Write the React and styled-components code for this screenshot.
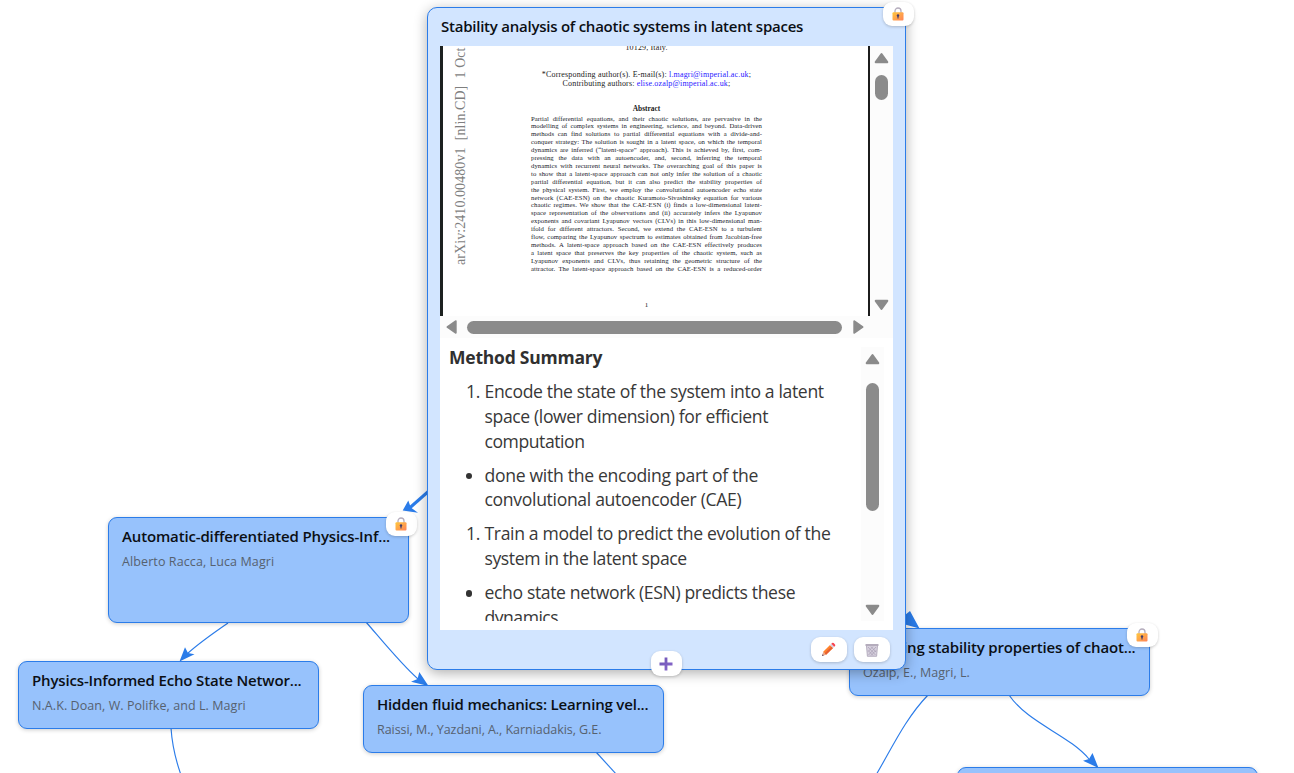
import React from "react";
import styled, { createGlobalStyle } from "styled-components";

const Global = createGlobalStyle`
  * { box-sizing: border-box; }
  body { margin: 0; background: #fff; overflow: hidden; }
`;

const Canvas = styled.main`
  position: relative;
  width: 1294px;
  height: 773px;
  overflow: hidden;
  background: #fff;
  font-family: "Open Sans", "Noto Sans", sans-serif;
`;

const Edges = styled.svg`
  position: absolute;
  inset: 0;
  fill: none;
  stroke: #2b7ce9;
  stroke-width: 1.15;
  polygon { fill: #2b7ce9; stroke: none; }
`;

const Node = styled.article`
  position: absolute;
  left: ${(p) => p.$x}px;
  top: ${(p) => p.$y}px;
  width: 301px;
  height: ${(p) => p.$h || 68}px;
  padding: 8px 13px;
  border: 1px solid #2b7ce9;
  border-radius: 9px;
  background: #97c2fc;
  box-shadow: 0 1px 4px rgba(0, 0, 0, 0.2);
`;

const Title = styled.h2`
  margin: 0;
  font-size: 15px;
  line-height: 20px;
  font-weight: 600;
  color: #0b0f14;
  white-space: nowrap;
  letter-spacing: ${(p) => p.$ls || 0}px;
`;

const Authors = styled.p`
  margin: 6px 0 0;
  font-size: 12.5px;
  line-height: 20px;
  color: #56616f;
  white-space: nowrap;
  letter-spacing: ${(p) => p.$ls || 0}px;
`;

const Paper = styled.article`
  position: absolute;
  left: 427px;
  top: 7px;
  width: 479px;
  height: 663px;
  display: flex;
  flex-direction: column;
  padding: 0 12px;
  border: 1px solid #2b7ce9;
  border-radius: 10px;
  background: #d2e5ff;
  box-shadow: 0 3px 13px rgba(0, 0, 0, 0.32);
`;

const PaperHead = styled.header`
  height: 38px;
  padding: 8px 1px 0;
`;

const Content = styled.div`
  width: 453px;
  height: 584px;
  background: #fff;
`;

const Viewer = styled.section`
  display: grid;
  grid-template-columns: 430px 23px;
  grid-template-rows: 270px 22px;
  background: #fcfcfc;
`;

const PdfPage = styled.div`
  display: flex;
  overflow: hidden;
  background: #fff;
  border-left: 3px solid #1d2120;
  border-right: 2px solid #1c1c1c;
  font-family: "Liberation Serif", serif;
`;

const Stamp = styled.div`
  writing-mode: vertical-rl;
  transform: rotate(180deg);
  width: 18px;
  height: 219px;
  margin-left: 9px;
  font-size: 14px;
  line-height: 18px;
  color: #7f7f7f;
  white-space: pre;
  letter-spacing: ${(p) => p.$ls}px;
`;

const PageText = styled.div`
  width: 231px;
  margin-left: 61px;
  display: flex;
  flex-direction: column;
  align-items: center;
  font-size: 8px;
  line-height: 9px;
  color: #222;
  white-space: nowrap;
`;

const Address = styled.div`
  margin-top: -3px;
  height: 27px;
  letter-spacing: 0.15px;
`;

const Contact = styled.div`
  letter-spacing: ${(p) => p.$ls}px;
  a { color: #2a20ff; }
`;

const AbstractHead = styled.div`
  margin-top: 16px;
  font-size: 7.4px;
  font-weight: 700;
`;

const Abstract = styled.div`
  width: 231px;
  margin-top: 1.5px;
  font-size: 6.7px;
  line-height: 7.92px;
  letter-spacing: 0.06px;
  color: #20222b;
`;

const AbstractLine = styled.div`
  text-align: justify;
  text-align-last: justify;
  white-space: nowrap;
  height: 7.92px;
`;

const PageNumber = styled.div`
  margin-top: 28px;
  font-size: 7px;
`;

const VBar = styled.div`
  display: flex;
  flex-direction: column;
  align-items: center;
  width: 23px;
  height: ${(p) => p.$h}px;
  padding: 6px 0 5px;
  background: #fcfcfc;
`;

const HBar = styled.div`
  display: flex;
  align-items: center;
  padding: 0 4px;
`;

const Thumb = styled.div`
  width: ${(p) => p.$w}px;
  height: ${(p) => p.$h}px;
  margin: ${(p) => p.$m};
  border-radius: 7px;
  background: #8b8b8b;
`;

const ArrowSvg = styled.svg`
  flex: none;
  transform: rotate(${(p) => p.$r}deg);
  fill: #8b8b8b;
  stroke: #8b8b8b;
  stroke-width: 2;
  stroke-linejoin: round;
`;

const Push = styled.div`
  flex: 1;
`;

const Notes = styled.section`
  display: flex;
  height: 283px;
  padding: 9px 9px 0 9px;
  color: #383838;
`;

const NotesText = styled.div`
  width: 412px;
  height: 274px;
  overflow: hidden;
`;

const NotesHead = styled.h3`
  margin: 0 0 11px;
  font-size: 17.5px;
  line-height: 21px;
  font-weight: 700;
  color: #303030;
  letter-spacing: ${(p) => p.$ls || 0}px;
`;

const Item = styled.div`
  display: flex;
  margin-bottom: 9.3px;
  font-size: 17.6px;
  line-height: 24.75px;
`;

const Marker = styled.span`
  width: ${(p) => (p.$dot ? 23 : 31)}px;
  margin-right: ${(p) => (p.$dot ? 12.5 : 4.5)}px;
  text-align: right;
  letter-spacing: -0.4px;
`;

const Dot = styled.span`
  display: inline-block;
  width: 6.5px;
  height: 6.5px;
  margin-bottom: 2.5px;
  border-radius: 50%;
  background: #333;
`;

const ItemLine = styled.div`
  white-space: nowrap;
  letter-spacing: ${(p) => p.$ls || 0}px;
`;

const Chip = styled.button`
  position: absolute;
  left: ${(p) => p.$x}px;
  top: ${(p) => p.$y}px;
  width: ${(p) => p.$w || 31}px;
  height: ${(p) => p.$h || 24}px;
  display: flex;
  align-items: center;
  justify-content: center;
  padding: 0 1px 0 0;
  border: 0;
  border-radius: 9px;
  background: #fff;
  box-shadow: 0 1px 3px rgba(0, 0, 0, 0.2);
`;

const Lock = () => (
  <svg width="12" height="14" viewBox="0 0 12 14">
    <defs>
      <linearGradient id="gold" x1="0" y1="0" x2="1" y2="1">
        <stop offset="0" stopColor="#ffc83d" />
        <stop offset="1" stopColor="#ff8257" />
      </linearGradient>
    </defs>
    <path d="M3 6V4a3 3 0 0 1 6 0v2" fill="none" stroke="#b4acbc" strokeWidth="1.3" />
    <rect x="0.5" y="5.2" width="11" height="8.3" rx="1" fill="url(#gold)" />
    <circle cx="6" cy="8.5" r="1.2" fill="#433b6b" />
    <path d="M6 8v3.5" stroke="#433b6b" strokeWidth="1.1" />
  </svg>
);

const Pencil = () => (
  <svg width="15" height="15" viewBox="0 0 15 15">
    <path d="M1 14l1.2-4.2 2.9 2.9z" fill="#e8a88c" />
    <path d="M1 14l.5-1.8 1.3 1.3z" fill="#54405c" />
    <path d="M2.2 9.8L9 3l3 3-6.9 6.8z" fill="#ff822d" />
    <path d="M3.7 11.3L10.5 4.5 12 6l-6.9 6.8z" fill="#e65f32" />
    <path d="M9 3l1.3-1.3 3 3L12 6z" fill="#d9cfe0" />
    <path d="M10.3 1.7l.8-.8q.8-.6 1.6.2l1.3 1.3q.7.8 0 1.6l-.7.7z" fill="#f8434f" />
  </svg>
);

const Trash = () => (
  <svg width="14" height="14" viewBox="0 0 14 14">
    <path d="M1.4 2h11.2l-1 11.3H2.4z" fill="#d6d0dd" stroke="#a9a1b5" strokeWidth=".8" />
    <path d="M3 4l7.5 8M6 3.5l5 5.5M3.2 7.5l4.8 5M11 4l-7.5 8M8 3.5L3.2 8.5M10.8 7.5l-4.8 5" stroke="#9d94ab" strokeWidth=".6" />
    <rect x=".5" y="1" width="13" height="2" rx=".5" fill="#b4acbc" />
  </svg>
);

const Plus = () => (
  <svg width="14" height="14" viewBox="0 0 14 14">
    <defs>
      <linearGradient id="violet" x1="0" y1="0" x2="1" y2="1">
        <stop offset="0" stopColor="#6d55b5" />
        <stop offset="1" stopColor="#8a68cc" />
      </linearGradient>
    </defs>
    <path d="M5.6 .5h2.8v5.1h5.1v2.8H8.4v5.1H5.6V8.4H.5V5.6h5.1z" fill="url(#violet)" />
  </svg>
);

const Arrow = ({ r }) => (
  <ArrowSvg $r={r} width="15" height="12" viewBox="0 0 15 12">
    <path d="M7.5 2L13.3 10.2H1.7z" />
  </ArrowSvg>
);

const abstract = [
  "Partial differential equations, and their chaotic solutions, are pervasive in the",
  "modelling of complex systems in engineering, science, and beyond. Data-driven",
  "methods can find solutions to partial differential equations with a divide-and-",
  "conquer strategy: The solution is sought in a latent space, on which the temporal",
  "dynamics are inferred (“latent-space” approach). This is achieved by, first, com-",
  "pressing the data with an autoencoder, and, second, inferring the temporal",
  "dynamics with recurrent neural networks. The overarching goal of this paper is",
  "to show that a latent-space approach can not only infer the solution of a chaotic",
  "partial differential equation, but it can also predict the stability properties of",
  "the physical system. First, we employ the convolutional autoencoder echo state",
  "network (CAE-ESN) on the chaotic Kuramoto-Sivashinsky equation for various",
  "chaotic regimes. We show that the CAE-ESN (i) finds a low-dimensional latent-",
  "space representation of the observations and (ii) accurately infers the Lyapunov",
  "exponents and covariant Lyapunov vectors (CLVs) in this low-dimensional man-",
  "ifold for different attractors. Second, we extend the CAE-ESN to a turbulent",
  "flow, comparing the Lyapunov spectrum to estimates obtained from Jacobian-free",
  "methods. A latent-space approach based on the CAE-ESN effectively produces",
  "a latent space that preserves the key properties of the chaotic system, such as",
  "Lyapunov exponents and CLVs, thus retaining the geometric structure of the",
  "attractor. The latent-space approach based on the CAE-ESN is a reduced-order",
];

const notes = [
  { mark: "1.", lines: [["Encode the state of the system into a latent", -0.36], ["space (lower dimension) for efficient", -0.38], ["computation", -0.45]] },
  { lines: [["done with the encoding part of the", -0.31], ["convolutional autoencoder (CAE)", -0.33]] },
  { mark: "1.", lines: [["Train a model to predict the evolution of the", -0.35], ["system in the latent space", -0.42]] },
  { lines: [["echo state network (ESN) predicts these", -0.37], ["dynamics", -0.5]] },
];

export default function App() {
  return (
    <Canvas>
      <Global />
      <Edges width="1294" height="773">
        <path d="M430 490L409 508.5" strokeWidth="3" />
        <polygon points="402.7,510.5 408.3,500.5 410.8,507.5 418,512.8" />
        <path d="M228 623C212 634 199 643 187 654" />
        <polygon points="179.5,661.5 185,647.3 188,653 194.5,654.3" />
        <path d="M366 622C385 644 402 665 418 679" />
        <polygon points="428.5,686 419.3,672 417.5,679 411,681.7" />
        <path d="M171 728Q172.5 751 181 775" />
        <path d="M596 752L617 775" />
        <path d="M928 695C905 719 892 748 876 775" />
        <path d="M1009 695C1028 723 1069 735 1089 759" />
        <polygon points="1098.5,768 1092.5,753 1089,759 1083,760.7" />
        <polygon points="919.5,628.5 910,611 905,615 896,622" />
      </Edges>

      <Node $x={108} $y={517} $h={106}>
        <Title $ls={-0.15}>Automatic-differentiated Physics-Inf...</Title>
        <Authors $ls={0.1}>Alberto Racca, Luca Magri</Authors>
      </Node>
      <Chip $x={386} $y={512}><Lock /></Chip>
      <Node $x={18} $y={661}>
        <Title $ls={-0.16}>Physics-Informed Echo State Networ...</Title>
        <Authors $ls={0.07}>N.A.K. Doan, W. Polifke, and L. Magri</Authors>
      </Node>
      <Node $x={849} $y={628}>
        <Title $ls={-0.17}>Inferring stability properties of chaot...</Title>
        <Authors $ls={0.04}>Özalp, E., Magri, L.</Authors>
      </Node>
      <Chip $x={1127} $y={623}><Lock /></Chip>
      <Node $x={957} $y={767} />

      <Paper>
        <PaperHead>
          <Title $ls={-0.24}>Stability analysis of chaotic systems in latent spaces</Title>
        </PaperHead>
        <Content>
          <Viewer>
            <PdfPage>
              <Stamp $ls={0.07}>{"arXiv:2410.00480v1  [nlin.CD]  1 Oct"}</Stamp>
              <PageText>
                <Address>10129, Italy.</Address>
                <Contact $ls={0.17}>*Corresponding author(s). E-mail(s): <a>l.magri@imperial.ac.uk</a>;</Contact>
                <Contact $ls={0.16}>Contributing authors: <a>elise.ozalp@imperial.ac.uk</a>;</Contact>
                <AbstractHead>Abstract</AbstractHead>
                <Abstract>
                  {abstract.map((line) => <AbstractLine key={line}>{line}</AbstractLine>)}
                </Abstract>
                <PageNumber>1</PageNumber>
              </PageText>
            </PdfPage>
            <VBar $h={270}>
              <Arrow r={0} />
              <Thumb $w={13} $h={25} $m="11px 0 0" />
              <Push />
              <Arrow r={180} />
            </VBar>
            <HBar>
              <Arrow r={-90} />
              <Thumb $w={375} $h={13} $m="0 9px 0 8px" />
              <Arrow r={90} />
            </HBar>
          </Viewer>
          <Notes>
            <NotesText>
              <NotesHead $ls={-0.22}>Method Summary</NotesHead>
              {notes.map((item, i) => (
                <Item key={i}>
                  <Marker $dot={!item.mark}>{item.mark || <Dot />}</Marker>
                  <div>
                    {item.lines.map(([text, ls]) => <ItemLine key={text} $ls={ls}>{text}</ItemLine>)}
                  </div>
                </Item>
              ))}
            </NotesText>
            <VBar $h={274}>
              <Arrow r={0} />
              <Thumb $w={13} $h={128} $m="18px 0 0" />
              <Push />
              <Arrow r={180} />
            </VBar>
          </Notes>
        </Content>
      </Paper>
      <Chip $x={883} $y={2}><Lock /></Chip>
      <Chip $x={811} $y={637} $w={36} $h={25}><Pencil /></Chip>
      <Chip $x={854} $y={637} $w={36} $h={25}><Trash /></Chip>

      <Node $x={363} $y={685}>
        <Title $ls={-0.18}>Hidden fluid mechanics: Learning vel...</Title>
        <Authors $ls={-0.05}>Raissi, M., Yazdani, A., Karniadakis, G.E.</Authors>
      </Node>
      <Chip $x={651} $y={651} $h={25}><Plus /></Chip>
    </Canvas>
  );
}
